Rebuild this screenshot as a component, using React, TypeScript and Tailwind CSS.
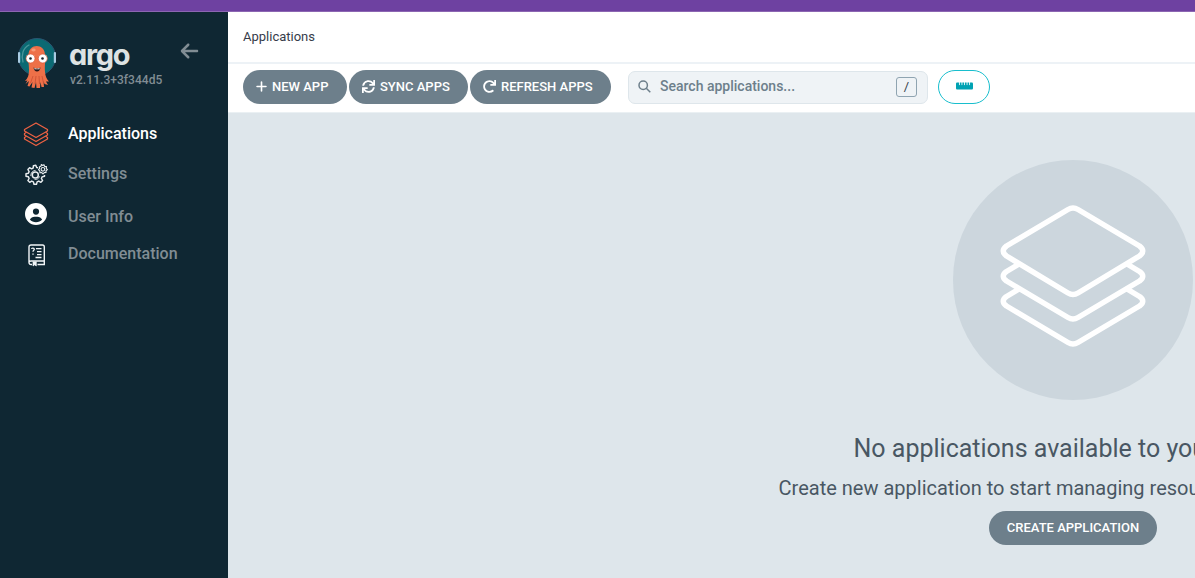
import React from 'react';
import { FaPlus, FaArrowLeft, FaRulerHorizontal, FaCircleUser } from 'react-icons/fa6';
import { FaSync, FaRedo } from 'react-icons/fa';

function ArgoMascot() {
  return (
    <svg width="40" height="52" viewBox="0 0 40 52" fill="none">
      <circle cx="20" cy="19" r="18.5" fill="#0b6a73" stroke="#2b5572" strokeWidth="1" />
      <path d="M6 24C4 17 6 10 12 7" stroke="#4b969b" strokeWidth="1.3" strokeLinecap="round" />
      <rect x="1" y="14" width="2.2" height="11" rx="1" fill="#a9cbe2" />
      <rect x="36.8" y="14" width="2.2" height="11" rx="1" fill="#a9cbe2" />
      <path d="M11.500 17C11.500 5 28 5 28 17C28.500 24 27.500 28 28 34C28.300 38 29.500 41 32 43.500L29 43.500L31 47L27.500 46L26.500 43L27 49L24.500 49L23.500 44L23 50L19.500 50L19 44L17.500 50L14.500 49.500L15.500 44L12.500 48.500L10.500 48L12 43L8.500 46L10.500 42.500L8 43C11 40 12 37 12 32C12 26 11 23 11.500 17Z" fill="#ee7048" />
      <path d="M16 38L13.500 45M19 38L18 46M22 38L22.500 46M25 38L26.500 45" stroke="#c94f35" strokeWidth=".8" />
      <ellipse cx="16.500" cy="12" rx="2.200" ry="1.400" fill="#f79b78" />
      <circle cx="13.500" cy="20.500" r="4.500" fill="#fff" stroke="#d95837" strokeWidth=".7" />
      <circle cx="25.800" cy="20.500" r="4.500" fill="#fff" stroke="#d95837" strokeWidth=".7" />
      <circle cx="13.500" cy="20.500" r="1.300" fill="#17222b" />
      <circle cx="25.500" cy="20.500" r="1.300" fill="#17222b" />
      <path d="M16.500 29.500Q20 31.500 23.500 29.500Q22.800 33.500 20 33.500Q17.200 33.500 16.500 29.500Z" fill="#25191b" />
      <path d="M17.500 30Q20 31.400 22.500 30V31.300H17.500Z" fill="#fff" />
    </svg>
  );
}

function SmallStack() {
  return (
    <svg width="26" height="25" viewBox="0 0 26 25" fill="none" stroke="#ee6243" strokeWidth="1.250" strokeLinejoin="round">
      <path d="M13 1L24.500 7.500V9L13 15.500L1.500 9V7.500Z" />
      <path d="M3.500 10.300L1.500 11.500V13L13 19.500L24.500 13V11.500L22.500 10.300" />
      <path d="M3.500 14.300L1.500 15.500V17L13 23.500L24.500 17V15.500L22.500 14.300" />
    </svg>
  );
}

function Gears() {
  return (
    <svg width="24" height="24" viewBox="0 0 24 24" fill="none" stroke="#e9edef" strokeWidth="1.450" strokeLinejoin="round">
      <path d="M13 4.800L11.700 4.500L10.800 2.300L8.400 2.600L8.200 5L6.600 5.800L4.600 4.700L2.900 6.500L4.100 8.600L3.400 10.200L1 10.700V13.200L3.400 13.800L4.100 15.500L2.900 17.500L4.700 19.300L6.700 18.100L8.400 18.900L9 21.300H11.500L12.100 18.900L13.800 18.100L15.900 19.300L17.600 17.500L16.400 15.500L17.100 13.900L19.500 13.200V12" />
      <circle cx="10.300" cy="12" r="3" />
      <path d="M5.800 13C5.800 9.700 7.600 7.600 10.600 7.400M14.600 13.400C13.700 15.900 11.500 16.700 9.500 16.300" strokeWidth=".9" />
      <path d="M16.300 1.500L17.400 2.400L19 1.800L19.600 3.400L21.500 3.600L21.200 5.400L22.400 6.600L21 7.800L21 9.500L19.300 9.600L18 10.800L16.800 9.600L15 9.800L14.800 8L13.500 6.700L14.600 5.400L14.400 3.700L16 3.200Z" strokeWidth="1.150" />
      <circle cx="17.900" cy="6.300" r="1.800" strokeWidth="1.100" />
    </svg>
  );
}

function DocsBook() {
  return (
    <svg width="18" height="23" viewBox="0 0 18 23" fill="none" stroke="#f2f6f8" strokeWidth="1.400">
      <path d="M4 20.500H3C1.800 20.500 1 19.700 1 18.500V3C1 1.800 1.800 1 3 1H14.500C15.600 1 16.300 1.700 16.300 2.800V20.500H9.500M1 18.500C1 17.600 1.800 17 3 17H16.300" />
      <path d="M5 17.500V22L6.700 20.800L8.300 22V17.500" fill="#f2f6f8" strokeWidth=".7" />
      <path d="M8 4.600H13.500M9 7.600H13.500M9 10.600H13.500M7.500 13.500H13.500" strokeWidth="1.400" />
      <path d="M3.700 5C3.700 3.700 6.300 3.700 6.300 5.200C6.300 6.400 5 6.300 5 7.800M5 9.500V10.700" strokeWidth="1.300" />
    </svg>
  );
}

function LargeStack() {
  return (
    <svg className="-mt-2" width="146" height="142" viewBox="0 0 146 142" fill="none" stroke="#fff" strokeWidth="5.500" strokeLinejoin="round">
      <path d="M68 4.500Q73 1.500 78 4.500L139.500 41Q146 46 139.500 51L78 88Q73 91 68 88L6.500 51Q0 46 6.500 41Z" />
      <path d="M19 59L6.500 66.500Q0 71 6.500 76L68 112.500Q73 115.500 78 112.500L139.500 76Q146 71 139.500 66.500L127 59" />
      <path d="M19 84L6.500 91.500Q0 96 6.500 101L68 137.500Q73 140.500 78 137.500L139.500 101Q146 96 139.500 91.500L127 84" />
    </svg>
  );
}

const navItem = 'flex items-center text-[16px] font-medium leading-5';
const pill = 'flex h-[34px] items-center rounded-full bg-[#6d7f8b] text-[13px] font-medium text-white';

export default function App() {
  return (
    <div className="flex h-[578px] w-full flex-col overflow-hidden bg-[#dee6eb] font-['Roboto',sans-serif]">
      <div className="h-3 shrink-0 border-b border-[#8c66b2] bg-[#6e41a1]" />
      <div className="flex min-h-0 flex-1">
        <aside className="w-[228px] shrink-0 bg-[#0f2733]">
          <div className="flex pt-[26px] pl-[17px]">
            <ArgoMascot />
            <div className="ml-[12px] w-[110px]">
              <div className="h-[34px] text-[29px] leading-[33px] font-bold tracking-[-1.300px] text-[#dee3e3] [font-family:Inter,sans-serif] [font-feature-settings:'cv11']">argo</div>
              <div className="ml-px text-[12px] leading-[17px] font-medium tracking-[0.05px] text-[#818d94]">v2.11.3+3f344d5</div>
            </div>
            <FaArrowLeft className="mt-[3px] ml-px h-5 w-[19px] text-[#818d94]" />
          </div>
          <nav className="flex flex-col pt-[33px] text-[#818d94]">
            <div className={navItem + ' h-[23px] text-white'}>
              <span className="flex w-[68px] pl-[23px]"><SmallStack /></span><span className="-mt-0.5">Applications</span>
            </div>
            <div className={navItem + ' mt-[17px] h-6'}>
              <span className="flex w-[68px] pl-[25px]"><Gears /></span><span className="-mt-0.5">Settings</span>
            </div>
            <div className={navItem + ' mt-[16px] h-[23px]'}>
              <span className="-mt-0.5 flex w-[68px] pl-[25px]"><FaCircleUser className="size-[22px] text-white" /></span><span className="mt-1">User Info</span>
            </div>
            <div className={navItem + ' mt-[18px] h-[23px]'}>
              <span className="flex w-[68px] pl-[28px]"><DocsBook /></span><span className="-mt-1">Documentation</span>
            </div>
          </nav>
        </aside>
        <main className="flex min-w-0 flex-1 flex-col overflow-hidden">
          <header className="flex h-[52px] shrink-0 items-center border-b-2 border-[#edf2f6] bg-white pl-[15px] text-[13px] text-[#363c4a]">
            <span>Applications</span>
          </header>
          <div className="flex h-[49px] shrink-0 items-center border-b border-[#eaf0f3] bg-white pb-[2px] pl-[15px]">
            <button className={pill + ' w-[104px] pl-[12px]'}><FaPlus className="mr-[4px] mb-0.5 size-[13px]" />NEW APP</button>
            <button className={pill + ' ml-[2px] w-[119px] pl-[13px]'}><FaSync className="mr-[5px] mb-0.5 size-[13px]" />SYNC APPS</button>
            <button className={pill + ' ml-[2px] w-[141px] pl-[13px]'}><FaRedo className="mr-[5px] mb-0.5 size-[13px]" />REFRESH APPS</button>
            <div className="ml-[17px] flex h-[33px] w-[300px] items-center rounded-[7px] border border-[#dee6eb] bg-[#eff3f6] pr-[10px] pl-[9px]">
              <svg className="-mt-px" width="13" height="13" viewBox="0 0 13 13" fill="none" stroke="#6d7f8b" strokeWidth="1.500"><circle cx="5.200" cy="5.200" r="4.200" /><path d="M8.300 8.300L12.300 12.300" /></svg>
              <span className="-mt-0.5 ml-[9px] flex-1 text-[14px] font-medium text-[#6d7f8b]">Search applications...</span>
              <kbd className="flex h-5 w-[21px] items-center justify-center rounded-[3px] border border-[#8fa4b1] font-['Roboto',sans-serif] text-[13px] text-[#363c4a]">/</kbd>
            </div>
            <button className="ml-[10px] flex h-[34px] w-[52px] items-center justify-center rounded-full border border-[#18becd] pb-0.5"><FaRulerHorizontal className="h-4 w-[17px] text-[#00a2b3]" /></button>
          </div>
          <section className="flex w-[1690px] flex-col items-center pt-[47px] text-[#495763]">
            <div className="flex size-[240px] items-center justify-center rounded-full bg-[#ccd6dd]"><LargeStack /></div>
            <h4 className="mt-[32px] text-[25px] leading-[34px] whitespace-nowrap">No applications available to you just yet</h4>
            <h5 className="mt-[8px] text-[20px] leading-[28px] whitespace-nowrap">Create new application to start managing resources in your cluster</h5>
            <button className={pill + ' mt-[9px] w-[168px] justify-center'}>CREATE APPLICATION</button>
          </section>
        </main>
      </div>
    </div>
  );
}
